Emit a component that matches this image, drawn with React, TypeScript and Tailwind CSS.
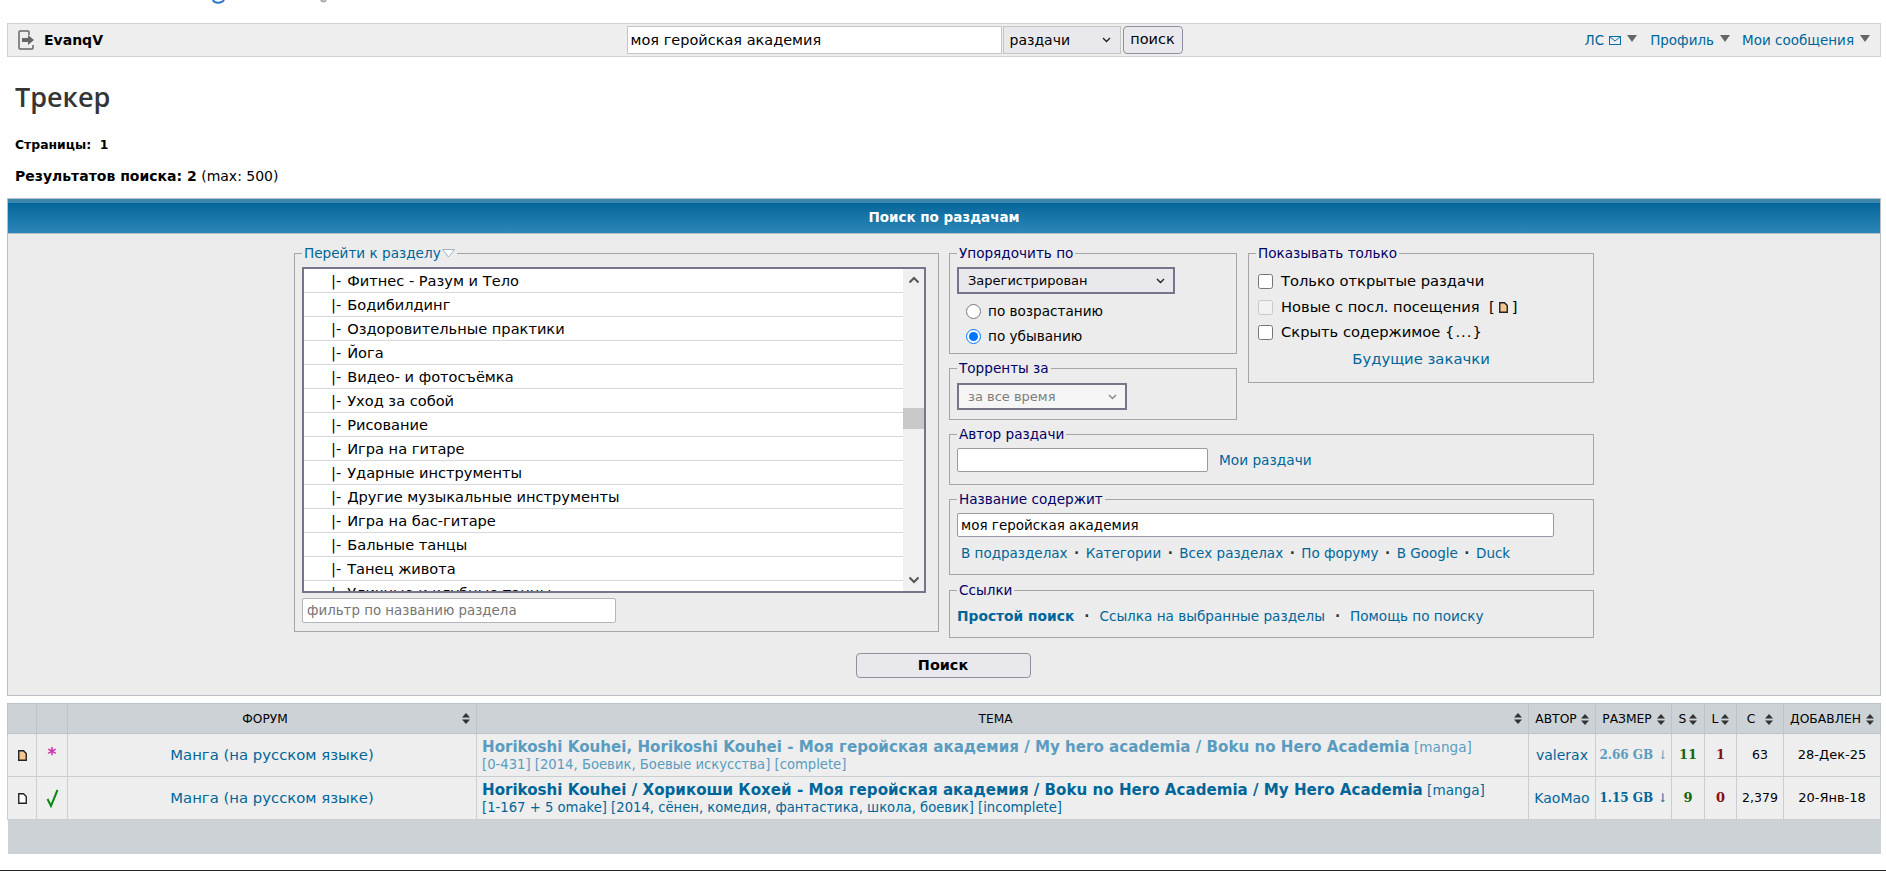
import React from "react";

const font = "font-['DejaVu_Sans',Verdana,sans-serif]";

const sections = [
  "Фитнес - Разум и Тело",
  "Бодибилдинг",
  "Оздоровительные практики",
  "Йога",
  "Видео- и фотосъёмка",
  "Уход за собой",
  "Рисование",
  "Игра на гитаре",
  "Ударные инструменты",
  "Другие музыкальные инструменты",
  "Игра на бас-гитаре",
  "Бальные танцы",
  "Танец живота",
  "Уличные и клубные танцы",
];

const SortIcon = () => (
  <svg width="8" height="11" viewBox="0 0 8 11" className="inline-block shrink-0">
    <path d="M4 0 L8 4.5 H0 Z M4 11 L8 6.5 H0 Z" fill="#333" />
  </svg>
);

const DocIcon = ({ fill }: { fill: string }) => (
  <svg width="9" height="11" viewBox="0 0 9 11" className="inline-block">
    <path d="M.75.75 H5.5 L8.25 3.5 V10.25 H.75 Z" fill={fill} stroke="#222" strokeWidth="1.4" />
  </svg>
);

const Caret = () => (
  <svg width="10" height="7" viewBox="0 0 10 7" className="inline-block ml-[6px] mb-[4px]">
    <path d="M0 0 H10 L5 7 Z" fill="#666" />
  </svg>
);

const Chevron = ({ color = "#222" }: { color?: string }) => (
  <svg width="9" height="6" viewBox="0 0 9 6" className="absolute right-[10px] top-1/2 -translate-y-1/2 pointer-events-none">
    <path d="M1 1 L4.5 4.5 L8 1" fill="none" stroke={color} strokeWidth="1.4" />
  </svg>
);

const Box = ({
  title,
  className,
  legendClass,
  children,
}: {
  title: React.ReactNode;
  className?: string;
  legendClass?: string;
  children: React.ReactNode;
}) => (
  <fieldset className={`border border-[#a5a5a5] ${className ?? ""}`}>
    <legend className={`ml-[7px] px-[2px] text-[13.6px] leading-[16px] ${legendClass ?? "text-[#000066]"}`}>{title}</legend>
    {children}
  </fieldset>
);

const Th = ({ label, gap }: { label?: string; gap?: string }) => (
  <th className="border border-[#bcc4ca] font-normal text-[12.3px] text-black pt-[1px]">
    {label && (
      <div className={`flex items-center justify-center px-[2px] ${gap ?? "gap-[5px]"}`}>
        <span>{label}</span>
        <SortIcon />
      </div>
    )}
  </th>
);

const Dot = () => <span className="text-[#333] font-bold mx-[6.5px]">·</span>;
const WideDot = () => <span className="text-[#333] font-bold mx-[10px]">·</span>;

export default function App() {
  return (
    <div className={`${font} bg-white h-[871px] overflow-hidden pl-[7px] pr-[5px] text-black`}>
      <div className="h-[23px] -ml-[7px]">
        <svg width="360" height="5" viewBox="0 0 360 5">
          <path d="M213 0 C214 3.5 222 3.5 224 0" fill="none" stroke="#2b78c5" strokeWidth="2" />
          <path d="M321 0 C322 2 325 2 326 0" fill="none" stroke="#aaa" strokeWidth="2" />
        </svg>
      </div>

      <div className="h-[34px] bg-[#eeeeee] border border-[#cfd2d5] grid grid-cols-[1fr_auto_1fr] items-center">
        <div className="flex items-center pl-[10px]">
          <svg width="17" height="20" viewBox="0 0 17 20">
            <path d="M11 5 V2 A1 1 0 0 0 10 1 H2 A1 1 0 0 0 1 2 V18 A1 1 0 0 0 2 19 H14 A1 1 0 0 0 15 18 V15" fill="none" stroke="#666" strokeWidth="1.5" />
            <path d="M4 8 H10 V5 L16 10 L10 15 V12 H4 Z" fill="#666" />
          </svg>
          <b className="ml-[9px] text-[14px]">EvanqV</b>
        </div>
        <div className="flex items-center mr-[79px]">
          <input
            readOnly
            value="моя геройская академия"
            className="w-[375px] h-[28px] bg-white border border-[#c5c5c5] px-[3px] text-[14.5px] outline-none"
          />
          <div className="relative ml-[1px]">
            <select className="block appearance-none w-[118px] h-[28px] bg-[#e9e9ed] border border-[#c5c5c5] pl-[6px] text-[14px]">
              <option>раздачи</option>
            </select>
            <Chevron />
          </div>
          <button className="h-[28px] ml-[2px] w-[60px] bg-[#e9e9ed] border border-[#8f8f9d] rounded-[4px] text-[14.5px]">поиск</button>
        </div>
        <div className="flex items-center justify-end pr-[10px] text-[13.5px] text-[#006699]">
          <span>ЛС</span>
          <svg width="12" height="9" viewBox="0 0 12 9" className="ml-[5px]">
            <rect x=".5" y=".5" width="11" height="8" fill="none" stroke="#0a6fa8" />
            <path d="M.5 .5 L6 5 L11.5 .5" fill="none" stroke="#0a6fa8" />
          </svg>
          <Caret />
          <span className="ml-[13px]">Профиль</span>
          <Caret />
          <span className="ml-[12px]">Мои сообщения</span>
          <Caret />
        </div>
      </div>

      <h1 className="mt-[23px] ml-[8px] font-['Open_Sans',sans-serif] font-semibold text-[27px] leading-[34px] text-[#353535]">Трекер</h1>
      <p className="mt-[24px] ml-[8px] text-[12.4px] leading-[14px] font-bold">Страницы:&nbsp; 1</p>
      <p className="mt-[16px] ml-[8px] text-[14px] leading-[16px]">
        <b>Результатов поиска: 2</b> (max: 500)
      </p>

      <div className="mt-[14px] border-x border-t border-[#b9bfc4]">
        <div className="h-[4px] bg-[#3d87ad]" />
        <div className="h-[30px] pb-[2px] bg-gradient-to-b from-[#03669a] to-[#2a87b8] flex items-center justify-center text-white font-bold text-[13.5px]">
          Поиск по раздачам
        </div>
      </div>
      <div className="h-[463px] bg-[#ececec] border border-[#b9bfc4] pt-[11px]">
        <div className="w-[1300px] mx-auto flex gap-[10px]">
          <Box
            title={
              <span className="inline-flex items-center">
                Перейти к разделу
                <svg width="13" height="9" viewBox="0 0 13 9" className="ml-[1px]">
                  <path d="M.5 .5 H12.5 L6.5 8 Z" fill="#fff" stroke="#9cb3c4" />
                </svg>
              </span>
            }
            legendClass="text-[#006699]"
            className="w-[645px] h-[387px]"
          >
            <div className="ml-[7px] mr-[12px] mt-[6px] h-[326px] border-2 border-[#767589] bg-white flex overflow-hidden">
              <div className="flex-1 overflow-hidden">
                {sections.map((s) => (
                  <div key={s} className="h-[24px] border-b border-[#d9d9d9] pl-[27px] text-[14.6px] leading-[23px] whitespace-pre">
                    |-<span className="ml-[6px]">{s}</span>
                  </div>
                ))}
              </div>
              <div className="w-[21px] bg-[#f0f0f0] flex flex-col items-center">
                <svg width="12" height="8" viewBox="0 0 12 8" className="mt-[7px]">
                  <path d="M1.5 6.5 L6 2 L10.5 6.5" fill="none" stroke="#555" strokeWidth="2" />
                </svg>
                <div className="h-[124px]" />
                <div className="h-[21px] w-full bg-[#c8c8c8]" />
                <div className="flex-1" />
                <svg width="12" height="8" viewBox="0 0 12 8" className="mb-[7px]">
                  <path d="M1.5 1.5 L6 6 L10.5 1.5" fill="none" stroke="#555" strokeWidth="2" />
                </svg>
              </div>
            </div>
            <input
              readOnly
              placeholder="фильтр по названию раздела"
              className="block ml-[7px] mt-[5px] w-[314px] h-[25px] bg-white border border-[#b5b5bd] rounded-[2px] px-[4px] text-[13.4px] placeholder:text-[#757575] outline-none"
            />
          </Box>

          <div className="w-[645px] flex flex-col gap-[6px]">
            <div className="flex gap-[11px] items-start">
              <div className="w-[288px] flex flex-col gap-[6px]">
                <Box title="Упорядочить по" className="h-[109px]">
                  <div className="relative ml-[7px] mt-[6px] w-[218px]">
                    <select className="block appearance-none w-full h-[27px] bg-[#e9e9ed] border-2 border-[#767589] pl-[9px] text-[13px]">
                      <option>Зарегистрирован</option>
                    </select>
                    <Chevron />
                  </div>
                  <label className="flex items-center ml-[16px] mt-[9px] h-[17px] text-[13.6px]">
                    <input type="radio" name="order" className="w-[15px] h-[15px] m-0" />
                    <span className="ml-[7px]">по возрастанию</span>
                  </label>
                  <label className="flex items-center ml-[16px] mt-[8px] h-[17px] text-[13.6px]">
                    <input type="radio" name="order" defaultChecked className="w-[15px] h-[15px] m-0" />
                    <span className="ml-[7px]">по убыванию</span>
                  </label>
                </Box>
                <Box title="Торренты за" className="h-[60px]">
                  <div className="relative ml-[7px] mt-[7px] w-[170px]">
                    <select disabled className="block appearance-none w-full h-[27px] bg-[#f5f5f5] border-2 border-[#767589] pl-[9px] text-[13px] text-[#7d7d7d] opacity-100">
                      <option>за все время</option>
                    </select>
                    <Chevron color="#888" />
                  </div>
                </Box>
              </div>
              <Box title="Показывать только" className="w-[346px] h-[138px]">
                <label className="flex items-center ml-[9px] mt-[12px] h-[16px] text-[14.7px]">
                  <input type="checkbox" className="w-[15px] h-[15px] m-0" />
                  <span className="ml-[8px]">Только открытые раздачи</span>
                </label>
                <label className="flex items-center ml-[9px] mt-[10px] h-[16px] text-[14.7px]">
                  <input type="checkbox" disabled className="w-[15px] h-[15px] m-0" />
                  <span className="ml-[8px] flex items-center">
                    Новые с посл. посещения&nbsp;&nbsp;[<span className="mx-[4px] flex"><DocIcon fill="#f5c78e" /></span>]
                  </span>
                </label>
                <label className="flex items-center ml-[9px] mt-[9px] h-[16px] text-[14.7px]">
                  <input type="checkbox" className="w-[15px] h-[15px] m-0" />
                  <span className="ml-[8px]">
                    Скрыть содержимое <span className="tracking-[1px]">{"{...}"}</span>
                  </span>
                </label>
                <div className="mt-[8px] text-center text-[14.8px] text-[#006699]">Будущие закачки</div>
              </Box>
            </div>

            <Box title="Автор раздачи" className="h-[59px]">
              <div className="flex items-center mt-[6px] ml-[7px]">
                <input readOnly className="w-[251px] h-[24px] bg-white border border-[#9a9aa5] rounded-[2px] outline-none" />
                <span className="ml-[11px] text-[13.7px] text-[#006699]">Мои раздачи</span>
              </div>
            </Box>
            <Box title="Название содержит" className="h-[84px]">
              <input
                readOnly
                value="моя геройская академия"
                className="block ml-[7px] mt-[6px] w-[597px] h-[24px] bg-white border border-[#9a9aa5] rounded-[2px] px-[3px] text-[13.5px] outline-none"
              />
              <div className="ml-[11px] mt-[7px] text-[13.5px] text-[#006699] leading-[18px]">
                В подразделах<Dot />Категории<Dot />Всех разделах<Dot />По форуму<Dot />В Google<Dot />Duck
              </div>
            </Box>
            <Box title="Ссылки" className="h-[56px] mt-[1px]">
              <div className="ml-[7px] mt-[9px] text-[13.6px] text-[#006699] leading-[18px]">
                <b className="text-[13.8px]">Простой поиск</b>
                <WideDot />
                Ссылка на выбранные разделы
                <WideDot />
                Помощь по поиску
              </div>
            </Box>
          </div>
        </div>
        <button className="block mx-auto mt-[15px] w-[175px] h-[25px] -translate-x-px bg-[#e9e9ed] border border-[#8f8f9d] rounded-[4px] font-bold text-[14.4px] leading-none">
          Поиск
        </button>
      </div>

      <table className="mt-[7px] w-full table-fixed border-collapse text-[13px]">
        <colgroup>
          <col className="w-[29px]" />
          <col className="w-[31px]" />
          <col className="w-[409px]" />
          <col className="w-[1052px]" />
          <col className="w-[67px]" />
          <col className="w-[76px]" />
          <col className="w-[33px]" />
          <col className="w-[32px]" />
          <col className="w-[47px]" />
          <col />
        </colgroup>
        <thead>
          <tr className="h-[30px] bg-[#cdd2d6]">
            <Th />
            <Th />
            <th className="border border-[#bcc4ca] font-normal text-[12.2px] pt-[1px]">
              <div className="flex items-center pr-[6px]"><span className="flex-1 text-center">ФОРУМ</span><SortIcon /></div>
            </th>
            <th className="border border-[#bcc4ca] font-normal text-[12.2px] pt-[1px]">
              <div className="flex items-center pr-[6px]"><span className="flex-1 text-center">ТЕМА</span><SortIcon /></div>
            </th>
            <Th label="АВТОР" gap="gap-[4px]" />
            <Th label="РАЗМЕР" />
            <Th label="S" gap="gap-[3px]" />
            <Th label="L" gap="gap-[3px]" />
            <Th label="C" gap="gap-[10px]" />
            <Th label="ДОБАВЛЕН" />
          </tr>
        </thead>
        <tbody>
          <Row
            doc="#f5c78e"
            mark={<span className="text-[#d030b0] text-[17px] font-bold">*</span>}
            title="Horikoshi Kouhei, Horikoshi Kouhei - Моя геройская академия / My hero academia / Boku no Hero Academia"
            sub="[0-431] [2014, Боевик, Боевые искусства] [complete]"
            seen
            author="valerax"
            size="2.66 GB"
            seeds="11"
            leech="1"
            c="63"
            date="28-Дек-25"
          />
          <Row
            doc="#ffffff"
            mark={
              <svg width="13" height="19" viewBox="0 0 13 19" className="inline-block">
                <path d="M1.5 10 L5 17 L11.5 1" fill="none" stroke="#0a8a14" strokeWidth="2" />
              </svg>
            }
            title="Horikoshi Kouhei / Хорикоши Кохей - Моя геройская академия / Boku no Hero Academia / My Hero Academia"
            sub="[1-167 + 5 omake] [2014, сёнен, комедия, фантастика, школа, боевик] [incomplete]"
            author="KaoMao"
            size="1.15 GB"
            seeds="9"
            leech="0"
            c="2,379"
            date="20-Янв-18"
          />
          <tr className="h-[34px] bg-[#cdd2d6]">
            <td colSpan={10} />
          </tr>
        </tbody>
      </table>
      <div className="mt-[16px] -mx-[7px] h-px bg-[#222]" />
    </div>
  );
}

function Row(props: {
  doc: string;
  mark: React.ReactNode;
  title: string;
  sub: string;
  seen?: boolean;
  author: string;
  size: string;
  seeds: string;
  leech: string;
  c: string;
  date: string;
}) {
  const link = props.seen ? "text-[#5a9cc0]" : "text-[#006699]";
  const td = "border border-[#c9ced2] text-center";
  return (
    <tr className="h-[43px] bg-[#eeeeee]">
      <td className={td}><DocIcon fill={props.doc} /></td>
      <td className={td}>{props.mark}</td>
      <td className={`${td} text-[#006699] text-[14.85px]`}>Манга (на русском языке)</td>
      <td className="border border-[#c9ced2] pl-[5px] pt-[2px] text-left text-[13.6px] leading-[18px]">
        <div className={`whitespace-nowrap ${link}`}>
          <b className="text-[15.1px]">{props.title}</b> <span>[manga]</span>
        </div>
        <div className={`whitespace-nowrap text-[13.2px] ${link}`}>{props.sub}</div>
      </td>
      <td className={`${td} text-[#006699] text-[14px]`}>{props.author}</td>
      <td className={`${td} ${link} text-[12px] font-bold font-['DejaVu_Serif',serif]`}>
        {props.size} <span className="font-normal">↓</span>
      </td>
      <td className={`${td} text-[#116611] font-bold font-['DejaVu_Serif',serif] text-[13px]`}>{props.seeds}</td>
      <td className={`${td} text-[#8a0f0f] font-bold font-['DejaVu_Serif',serif] text-[13px]`}>{props.leech}</td>
      <td className={`${td} text-[12.5px]`}>{props.c}</td>
      <td className={`${td} text-[13px]`}>{props.date}</td>
    </tr>
  );
}
